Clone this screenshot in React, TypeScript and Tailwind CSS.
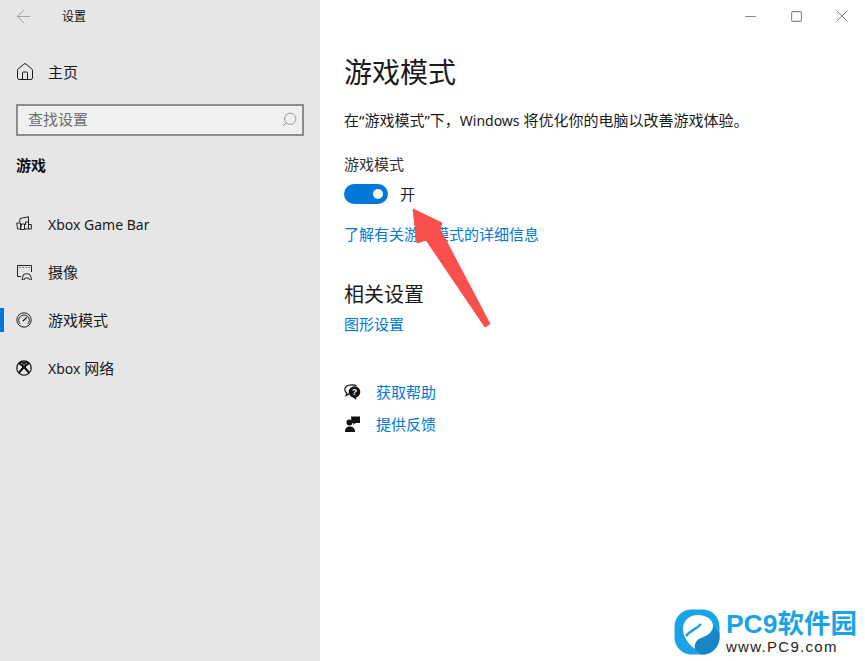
import { Home, Search, ArrowLeft, Minus, Square, X } from "lucide-react";

const font = { fontFamily: '"Noto Sans", "Noto Sans CJK SC", sans-serif' };

function GameBarIcon() {
  return (
    <svg width="16" height="16" viewBox="0 0 16 16" fill="none" stroke="#222" strokeWidth="1">
      <path d="M3.5 6.5 L4 2.5 L12.5 .8 V6" />
      <path d="M.8 7 H4.5 V13 H1.5 Z" />
      <path d="M4.5 13.5 H8.5 V8 H5.5 Z" />
      <path d="M8.5 13 H12.5 V6 H9.5 V9" />
      <path d="M12.5 8.5 H15.3 V13 H12.5" />
    </svg>
  );
}

function CaptureIcon() {
  return (
    <svg width="16" height="16" viewBox="0 0 16 16" fill="none" stroke="#222" strokeWidth="1">
      <path d="M1.5 12.5 V1.5 H15.5 V8" />
      <path d="M1.5 12.5 H5" />
      <path d="M3.5 3.5 H13.5" strokeDasharray="1 2" />
      <path d="M6 16 L7.5 10.5 C9.5 9.5 12.5 9.5 14 10.5 L15.8 16 H13.5 L12.5 14 H9 L8 16 Z" />
    </svg>
  );
}

function GaugeIcon() {
  return (
    <svg width="16" height="16" viewBox="0 0 16 16" fill="none" stroke="#222" strokeWidth="1">
      <circle cx="8" cy="8" r="7.2" />
      <path d="M4.2 12 A5.3 5.3 0 1 1 11.8 12" />
      <path d="M6.8 9.2 L10.8 5.2" strokeWidth="1.3" />
    </svg>
  );
}

function XboxIcon() {
  return (
    <svg width="16" height="16" viewBox="0 0 16 16" fill="none" stroke="#111" strokeWidth="1.2">
      <circle cx="8" cy="8" r="7.2" />
      <path d="M2.8 3 C6.5 5 10.5 9.5 13.2 13.2" strokeWidth="2" />
      <path d="M13.2 3 C9.5 5 5.5 9.5 2.8 13.2" strokeWidth="2" />
      <path d="M4 1.8 C6 2 7 3 8 4 C9 3 10 2 12 1.8" fill="#111" />
    </svg>
  );
}

function HelpIcon() {
  return (
    <svg width="17" height="16" viewBox="0 0 17 16">
      <path d="M7 1 C3.4 1 .8 3 .8 5.6 C.8 7 1.6 8.2 2.8 9 L2 11.5 L5 9.9" fill="none" stroke="#111" strokeWidth="1.2" />
      <path d="M6.5 1 C8.5 .7 11 1 12.5 2" fill="none" stroke="#111" strokeWidth="1.2" />
      <circle cx="10.5" cy="8" r="5.8" fill="#111" />
      <path d="M8 12.5 L12 15.8 L12.5 12.5 Z" fill="#111" />
      <text x="10.5" y="11" textAnchor="middle" fontSize="8.5" fontWeight="700" fill="#fff" fontFamily="Liberation Sans, sans-serif">?</text>
    </svg>
  );
}

function FeedbackIcon() {
  return (
    <svg width="16" height="16" viewBox="0 0 16 16" fill="#111">
      <circle cx="5.5" cy="6.5" r="3" />
      <path d="M1 16 C1 12 3 10.5 5.5 10.5 C8.5 10.5 11 12 11 16 Z" />
      <path d="M7 .5 H16 V7 H11.5 L9.5 9 V7 H7.5 Z" />
    </svg>
  );
}

function NavItem({ icon, label, active }: { icon: React.ReactNode; label: React.ReactNode; active?: boolean }) {
  return (
    <div className="relative flex h-12 items-center pl-4 text-[15px] text-[#1a1a1a]">
      {active && <div className="absolute left-0 top-3 h-6 w-1 bg-[#0078d7]" />}
      <span className="flex w-8 items-center">{icon}</span>
      <span>{label}</span>
    </div>
  );
}

function Logo() {
  return (
    <div className="absolute bottom-[6px] right-[8px] flex items-center gap-[6px]">
      <svg width="46" height="46" viewBox="0 0 46 46">
        <defs>
          <clipPath id="logo-clip">
            <rect x="0.5" y="0.5" width="45" height="45" rx="17" />
          </clipPath>
        </defs>
        <rect x="0.5" y="0.5" width="45" height="45" rx="17" fill="#1ba3e8" />
        <path d="M39 17 L46 24 V46 H27 L21 40 C20 35 22 31 27 29 C32 27 39 24 39 17 Z" fill="#1686c4" clipPath="url(#logo-clip)" />
        <path d="M24 6 C33 6 39 11 39 17 C39 24 32 27 27 29 C22 31 20 35 21 40 C15 36 9 28 9 20 C9 12 15 6 24 6 Z" fill="#fff" />
        <path d="M12 27 C16 21 22 21 27 15" fill="none" stroke="#1ba3e8" strokeWidth="2.5" />
      </svg>
      <div className="flex flex-col">
        <span className="text-[26.5px] font-bold leading-[29px] text-[#1ba3e8]" style={{ fontFamily: '"Liberation Sans", "Noto Sans CJK SC", sans-serif' }}>
          PC9软件园
        </span>
        <span className="text-[15px] leading-[15px] tracking-[1.3px] text-[#222]" style={{ fontFamily: '"Liberation Sans", sans-serif' }}>
          www.PC9.com
        </span>
      </div>
    </div>
  );
}

export default function App() {
  return (
    <div className="relative flex h-[661px] w-[865px] overflow-hidden bg-white" style={font}>
      <aside className="flex h-full w-80 shrink-0 flex-col bg-[#e6e6e6]">
        <div className="flex h-8 items-center pl-[13px] pt-px text-xs text-[#111]">
          <ArrowLeft size={21} className="text-[#999]" strokeWidth={1} />
          <span className="ml-7">设置</span>
        </div>
        <div className="mt-4 flex h-12 items-center pl-[15px] text-[15px] text-[#1a1a1a]">
          <Home size={20} strokeWidth={1.2} />
          <span className="ml-[13px]">主页</span>
        </div>
        <div className="mx-4 mt-2 flex h-8 items-center justify-between border-2 border-[#8c8c8c] bg-[#f0f0f0] pb-px pl-[10px] pr-1 text-[15px] text-[#6e6e6e]">
          <span>查找设置</span>
          <Search size={17} className="-scale-x-100 text-[#777]" strokeWidth={1} />
        </div>
        <div className="mt-[19px] pl-4 text-[15px] font-bold leading-5 text-[#111]">游戏</div>
        <div className="mt-[25px]">
          <NavItem icon={<GameBarIcon />} label={<span className="text-sm">Xbox Game Bar</span>} />
          <NavItem icon={<CaptureIcon />} label="摄像" />
          <NavItem icon={<GaugeIcon />} label="游戏模式" active />
          <NavItem icon={<XboxIcon />} label={<><span className="text-sm">Xbox</span> 网络</>} />
        </div>
      </aside>

      <main className="flex flex-1 flex-col pl-6">
        <h1 className="mt-[51px] text-[28px] leading-[42px] text-[#1a1a1a]">游戏模式</h1>
        <p className="mt-[17px] text-[15px] leading-5 text-[#1a1a1a]">在“游戏模式”下，<span className="text-sm">Windows</span> 将优化你的电脑以改善游戏体验。</p>
        <div className="mt-[23px] text-[15px] leading-5 text-[#333]">游戏模式</div>
        <div className="mt-[10px] flex h-5 items-center">
          <div className="flex h-5 w-11 items-center justify-end rounded-full bg-[#0078d7] pr-[5px]">
            <div className="h-[10px] w-[10px] rounded-full bg-white" />
          </div>
          <span className="ml-3 text-[15px] text-[#1a1a1a]">开</span>
        </div>
        <div className="mt-5 text-[15px] leading-5 text-[#0078d7]">了解有关游戏模式的详细信息</div>
        <h2 className="mt-9 text-xl leading-[30px] text-[#1a1a1a]">相关设置</h2>
        <div className="mt-1 text-[15px] leading-5 text-[#0078d7]">图形设置</div>
        <div className="mt-12 flex h-5 items-center text-[15px] text-[#0078d7]">
          <span className="flex w-8 items-center"><HelpIcon /></span>
          获取帮助
        </div>
        <div className="mt-3 flex h-5 items-center text-[15px] text-[#0078d7]">
          <span className="flex w-8 items-center"><FeedbackIcon /></span>
          提供反馈
        </div>
      </main>

      {/* window buttons */}
      <div className="absolute right-0 top-0 flex h-8 items-center text-[#888]">
        <span className="flex w-[46px] justify-center"><Minus size={17} strokeWidth={1.4} /></span>
        <span className="flex w-[46px] justify-center"><Square size={13} strokeWidth={2} /></span>
        <span className="flex w-[46px] justify-center"><X size={20} strokeWidth={1.2} /></span>
      </div>

      {/* red arrow annotation */}
      <svg className="absolute left-0 top-0" width="865" height="661" viewBox="0 0 865 661">
        <path d="M413 209 L442 223 L440 229 L490 324 L485 327 L426 240 L417 243 Z" fill="#f9504e" stroke="#f9504e" strokeLinejoin="round" />
      </svg>

      <Logo />
    </div>
  );
}
